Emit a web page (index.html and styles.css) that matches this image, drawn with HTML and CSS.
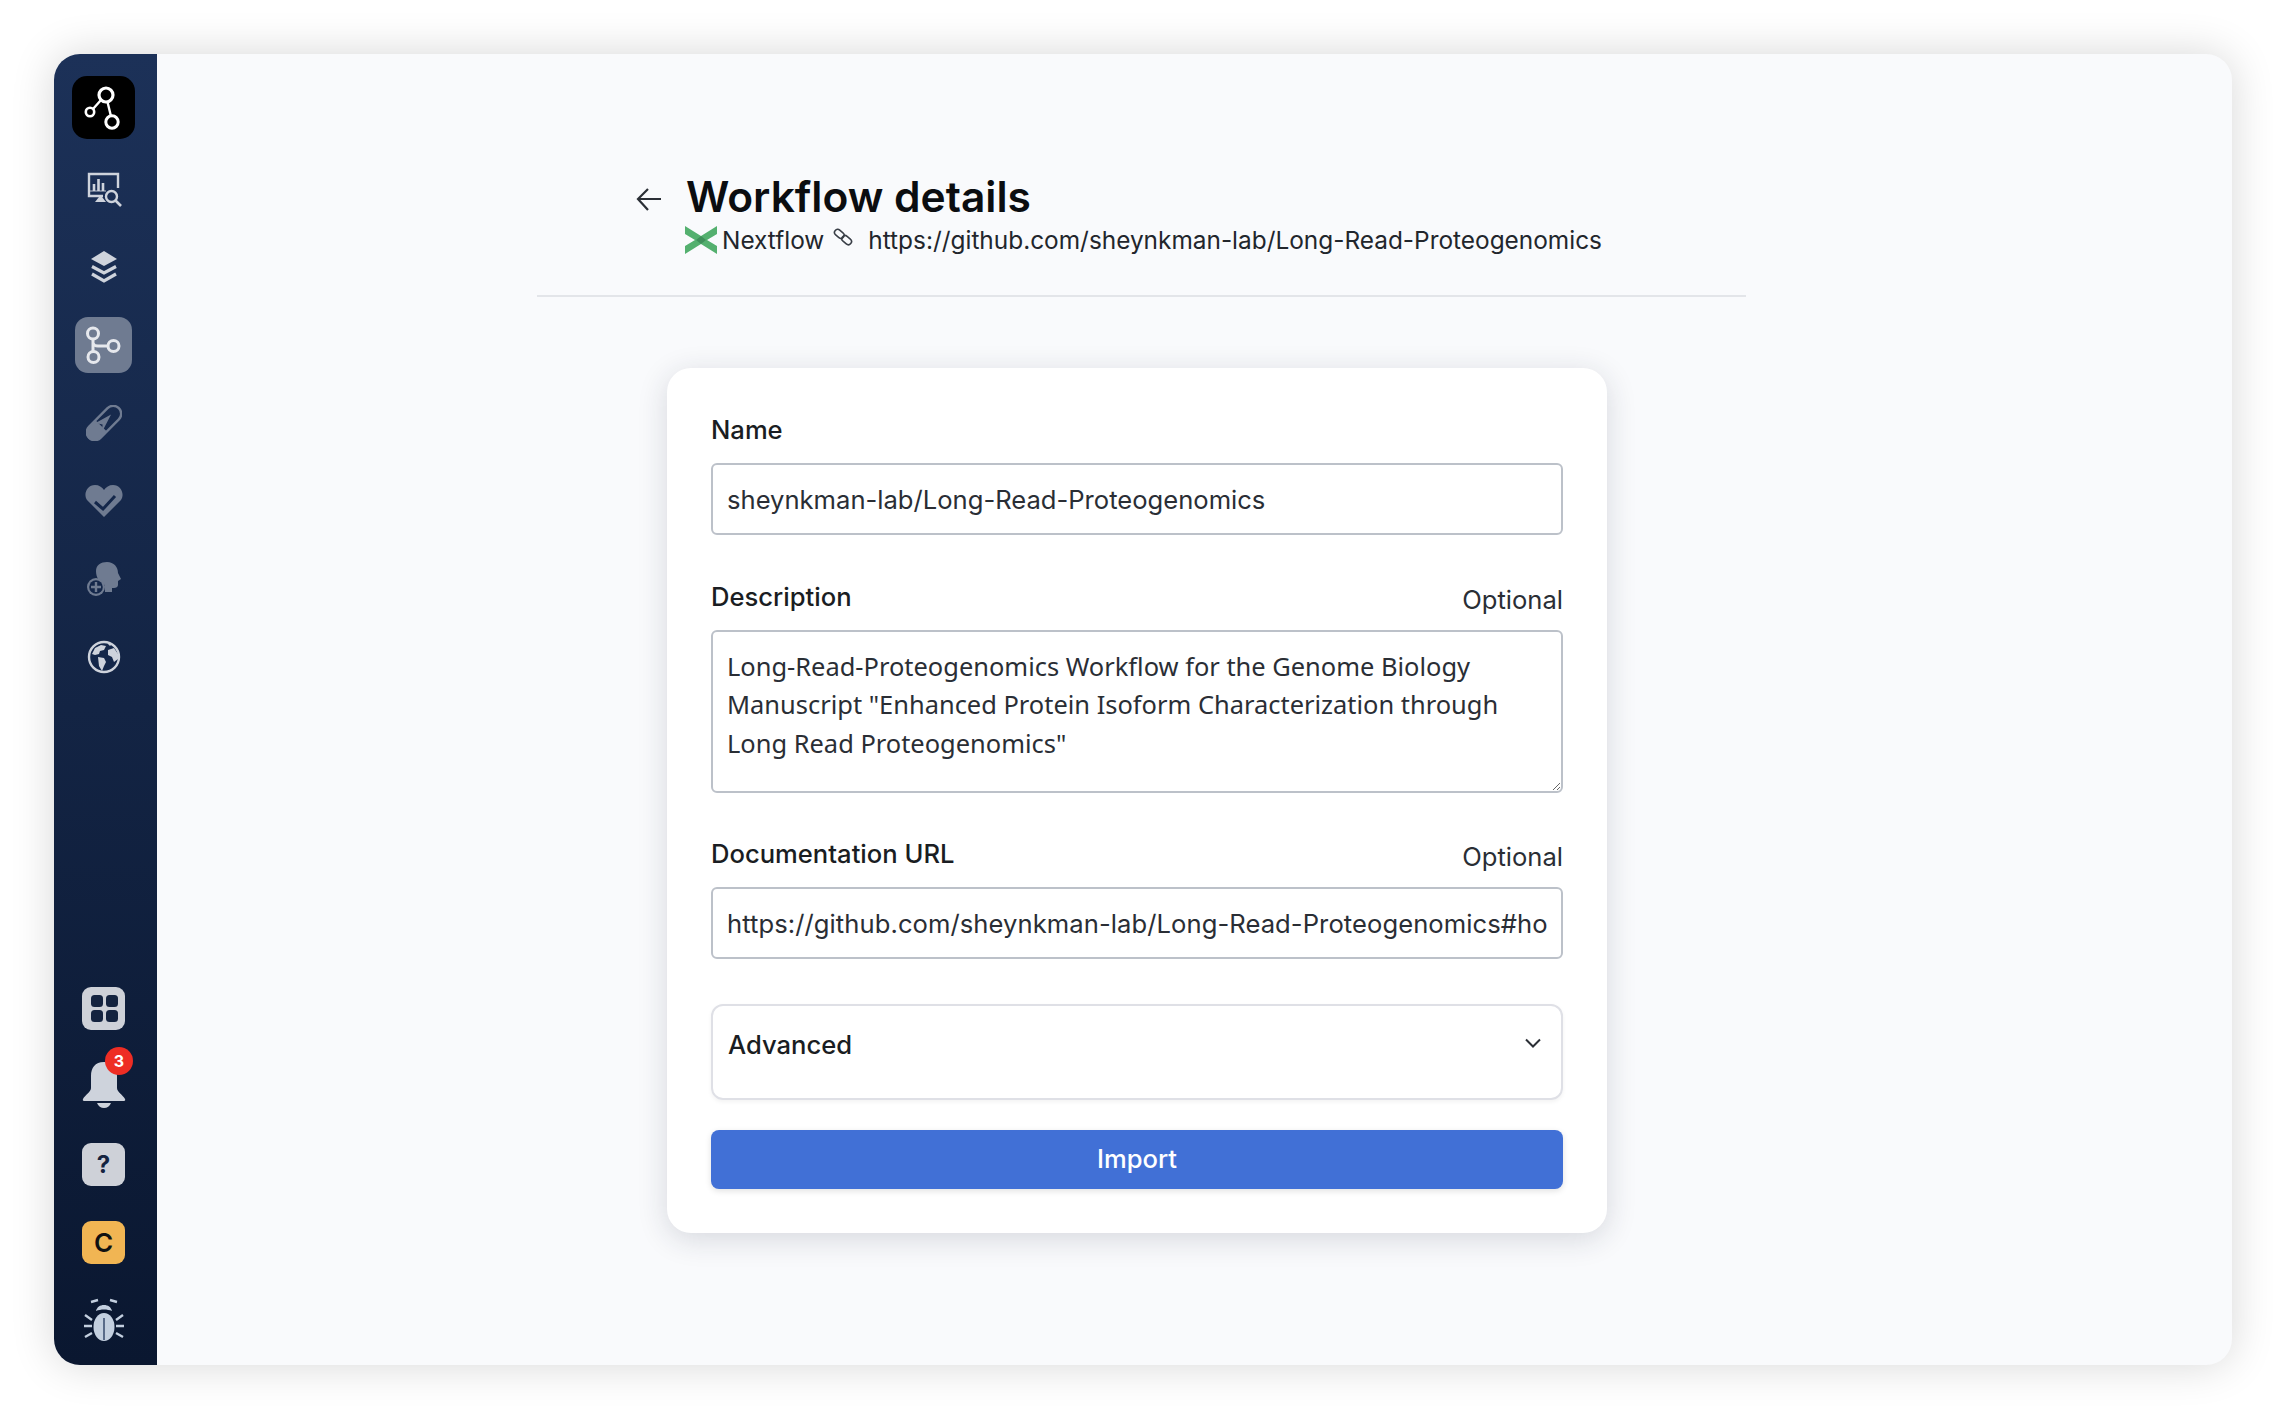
FILE: index.html
```html
<!DOCTYPE html>
<html lang="en">
<head>
<meta charset="utf-8">
<title>Workflow details</title>
<link rel="stylesheet" href="styles.css">
</head>
<body>
<div class="window">
  <nav class="sidebar">
    <div class="nav-top">
      <div class="logo">
        <svg width="63" height="63" viewBox="0 0 63 63" fill="none" stroke="#fff"><circle cx="34" cy="19" r="7" stroke-width="3.2"/><circle cx="18" cy="36" r="4.2" stroke-width="2.6"/><circle cx="40" cy="46" r="6.2" stroke-width="3"/><path d="M29 24 21 33M35.500 26 38.800 39.500" stroke-width="2.4"/></svg>
      </div>
      <div class="slot">
        <svg width="36" height="36" viewBox="0 0 36 36" fill="none" stroke="#ced3dc"><path d="M17 25H3V3H32V17" stroke-width="2.4"/><path d="M8 20V13M12.500 20V8M17 20V12" stroke-width="2.6"/><path d="M3 20H20" stroke-width="1.6" opacity=".6"/><path d="M9 31l4-5h3l4 5z" fill="#ced3dc" stroke="none"/><circle cx="25.500" cy="25.500" r="5.500" stroke-width="2.4"/><path d="M29.500 29.500 35 35" stroke-width="2.6"/></svg>
      </div>
      <div class="slot">
        <svg width="36" height="36" viewBox="0 0 36 36" fill="none" stroke="#ced3dc"><path d="M18 2 31 10 18 17 5 10z" fill="#ced3dc" stroke="none"/><path d="M6 17.500 18 24 30 17.500M6 25 18 32 30 25" stroke-width="3.2"/></svg>
      </div>
      <div class="slot">
        <div class="slot-active">
          <svg width="57" height="56" viewBox="0 0 57 56" fill="none" stroke="#e6e8ed" stroke-width="3"><circle cx="18" cy="16.500" r="5.500"/><circle cx="18.500" cy="40" r="5.500"/><circle cx="38.500" cy="29" r="5.500"/><path d="M18 22V34.500M18 26C18.500 28 20 29 23 29H33"/></svg>
        </div>
      </div>
      <div class="slot">
        <svg width="36" height="36" viewBox="0 0 36 36"><g transform="translate(18 18) rotate(-45)"><rect x="-21" y="-8" width="42" height="16" rx="8" fill="none" stroke="#6f7b91" stroke-width="2.400"/><path d="M-4-8H-14a8 8 0 0 0 0 16H-4z" fill="#6f7b91"/><path d="M-8 5 11-1-6-6-2 0z" fill="#6f7b91"/></g></svg>
      </div>
      <div class="slot">
        <svg width="40" height="36" viewBox="0 0 40 36"><path d="M20 34 3 17C-1 11 3 2 11 2c4 0 7 2 9 5 2-3 5-5 9-5 8 0 12 9 8 15z" fill="#6f7b91"/><path d="M11 19l8 7L31 13" fill="none" stroke="#14274a" stroke-width="3"/></svg>
      </div>
      <div class="slot">
        <svg width="36" height="36" viewBox="0 0 36 36"><path d="M10 10C10 4 15 1 21 1c7 0 11 5 11 11l3 6-3 2v4c0 2-2 3-4 3h-2v4H19v-7c-6-2-9-8-9-14z" fill="#6f7b91"/><circle cx="10" cy="26" r="9" fill="#6f7b91"/><circle cx="10" cy="26" r="6.800" fill="#14274a"/><path d="M10 21v10M5 26h10" stroke="#6f7b91" stroke-width="2.400"/></svg>
      </div>
      <div class="slot">
        <svg width="36" height="36" viewBox="0 0 36 36"><circle cx="18" cy="18" r="15" fill="#14274a" stroke="#ced3dc" stroke-width="2.4"/><path d="M9 9l6-3 5 1-2 4-4 1-1 3-4 1-3-1zM12 18l6 1 2 4-2 4-2 5-3-5zM22 11l6-2 4 6v5l-4 3-2-5-4-2zM22 5h4l-2 2z" fill="#ced3dc"/></svg>
      </div>
    </div>
    <div class="nav-bottom">
      <div class="slot">
        <div class="tile">
          <svg width="42" height="42" viewBox="0 0 42 42" fill="#14233f"><rect x="8" y="8" width="12" height="12" rx="3.500"/><rect x="23" y="8" width="12" height="12" rx="3.500"/><rect x="8" y="23" width="12" height="12" rx="3.500"/><rect x="23" y="23" width="12" height="12" rx="3.500"/></svg>
        </div>
      </div>
      <div class="slot">
        <svg class="bell" width="44" height="50" viewBox="0 0 44 50" fill="#ced3dc"><path d="M22 3c9 0 13 6 13 14v12c0 4 6 7 8 11 .5 1 0 2-1 2H2c-1 0-1.500-1-1-2 2-4 8-7 8-11V17C9 9 13 3 22 3z"/><path d="M15 44h14c-1 3-4 5-7 5s-6-2-7-5z"/></svg>
        <span class="badge">3</span>
      </div>
      <div class="slot"><div class="tile">?</div></div>
      <div class="slot"><div class="tile tile-user">C</div></div>
      <div class="slot">
        <svg width="42" height="44" viewBox="0 0 42 44" fill="#c3cfdf" stroke="#c3cfdf"><ellipse cx="21" cy="29" rx="10.500" ry="14" stroke="none"/><path d="M13 13c1-4 4-6 8-6s7 2 8 6c-5-2-11-2-16 0z" stroke="none"/><path d="M21 20V42" stroke="#3f5273" stroke-width="1.600"/><path d="M8 4l7-2M34 4l-7-2M2 17l7 5M40 17l-7 5M1 28h8M41 28h-8M2 39l7-4M40 39l-7-4" fill="none" stroke-width="2.400"/></svg>
      </div>
    </div>
  </nav>
  <main class="main">
    <header class="page-head">
      <svg class="back" width="26" height="26" viewBox="0 0 26 26" fill="none" stroke="#2b2f36" stroke-width="2.200"><path d="M25 13H3M12 3 2 13l10 11"/></svg>
      <div class="head-text">
        <h1 class="title">Workflow details</h1>
        <div class="meta">
          <svg class="nf" width="32" height="28" viewBox="0 0 32 28"><path d="M0 0 16 10 32 0V8L22 14 32 20V28L16 18 0 28V20L10 14 0 8z" fill="#54b06f"/><path d="M11 14 16 10 21 14 16 18z" fill="#3f8f5a"/></svg>
          <span class="engine">Nextflow</span>
          <svg class="link-icon" width="20" height="20" viewBox="0 0 19 19" fill="none" stroke="#3a3f47" stroke-width="1.500"><rect x="1" y="3.500" width="10" height="6" rx="3" transform="rotate(40 6 6.500)"/><rect x="8" y="9.500" width="10" height="6" rx="3" transform="rotate(40 13 12.500)"/></svg>
          <span class="url">https://github.com/sheynkman-lab/Long-Read-Proteogenomics</span>
        </div>
      </div>
    </header>
    <form class="card">
      <div class="field">
        <div class="label-row"><label class="label">Name</label></div>
        <input class="input" value="sheynkman-lab/Long-Read-Proteogenomics">
      </div>
      <div class="field">
        <div class="label-row"><label class="label">Description</label><span class="optional">Optional</span></div>
        <textarea class="input textarea">Long-Read-Proteogenomics Workflow for the Genome Biology Manuscript "Enhanced Protein Isoform Characterization through Long Read Proteogenomics"</textarea>
      </div>
      <div class="field">
        <div class="label-row"><label class="label">Documentation URL</label><span class="optional">Optional</span></div>
        <input class="input input-url" value="https://github.com/sheynkman-lab/Long-Read-Proteogenomics#how-to-run">
      </div>
      <div class="advanced">
        <span class="advanced-title">Advanced</span>
        <svg width="16" height="10" viewBox="0 0 16 10" fill="none" stroke="#2b2f36" stroke-width="2"><path d="M1 1.500 8 8.500 15 1.500"/></svg>
      </div>
      <button type="button" class="import">Import</button>
    </form>
  </main>
</div>
</body>
</html>
```
FILE: styles.css
```css
* { box-sizing: border-box; }
html, body { margin: 0; height: 100%; }
body {
  padding: 54px;
  background: #fff;
  font-family: Inter, "Liberation Sans", sans-serif;
  color: #1a1d22;
}
.window {
  display: flex;
  height: 1311px;
  border-radius: 26px;
  background: #f9fafc;
  overflow: hidden;
  box-shadow: 0 0 44px rgba(0, 0, 0, .16);
}
.sidebar {
  width: 103px;
  flex: none;
  display: flex;
  flex-direction: column;
  justify-content: space-between;
  padding: 22px 4px 6px 0;
  background: linear-gradient(180deg, #1c3158 0%, #0a1730 100%);
}
.nav-top, .nav-bottom { display: flex; flex-direction: column; align-items: center; }
.logo {
  width: 63px;
  height: 63px;
  margin-bottom: 11px;
  border-radius: 15px;
  background: #000;
}
.logo svg, .slot-active svg, .tile svg { display: block; }
.slot {
  position: relative;
  width: 99px;
  height: 78px;
  display: flex;
  align-items: center;
  justify-content: center;
}
.slot-active { width: 57px; height: 56px; border-radius: 13px; background: #6f7b91; }
.tile {
  width: 43px;
  height: 43px;
  display: flex;
  align-items: center;
  justify-content: center;
  border-radius: 9px;
  background: #ced1d8;
  color: #14233f;
  font-size: 24px;
  font-weight: 700;
}
.tile-user { background: #f1b553; color: #111; font-size: 26px; font-weight: 600; }
.bell { margin-top: -5px; }
.badge {
  position: absolute;
  top: 0;
  left: 51px;
  width: 28px;
  height: 28px;
  display: flex;
  align-items: center;
  justify-content: center;
  border-radius: 50%;
  background: #ee2d24;
  color: #fff;
  font-size: 16px;
  font-weight: 700;
}
.main { flex: 1; min-width: 0; padding: 118px 0 0 380px; }
.page-head {
  width: 1209px;
  height: 125px;
  display: flex;
  align-items: flex-start;
  gap: 24px;
  padding-left: 99px;
  border-bottom: 2px solid #e3e5e9;
}
.back { margin-top: 14px; flex: none; }
.title { margin: 0; font-size: 42.500px; line-height: 50px; font-weight: 600; color: #0b0d10; }
.meta { display: flex; align-items: center; height: 28px; margin-top: 4px; margin-left: -1px; font-size: 24.400px; line-height: 28px; color: #22262c; }
.engine { margin-left: 5px; }
.link-icon { margin: -6px 0 0 9px; }
.url { margin-left: 15px; white-space: nowrap; }
.card {
  width: 940px;
  margin: 71px 0 0 130px;
  padding: 44px;
  background: #fff;
  border-radius: 24px;
  box-shadow: 0 6px 30px rgba(30, 40, 60, .16);
}
.field { margin-bottom: 44px; }
.label-row { display: flex; align-items: center; justify-content: space-between; height: 51px; padding-bottom: 16px; }
.label { font-size: 25.600px; line-height: 30px; font-weight: 500; color: #1a1d22; }
.optional { font-size: 25.600px; line-height: 30px; color: #2a2e35; transform: translateY(3px); }
.input {
  display: block;
  width: 100%;
  height: 72px;
  padding: 0 14px;
  border: 2px solid #bcc1c9;
  border-radius: 6px;
  background: #fff;
  font-family: inherit;
  font-size: 25.600px;
  color: #2a2e35;
}
.input-url { letter-spacing: .07px; }
.textarea {
  height: 163px;
  margin-bottom: -1px;
  padding: 15px 14px;
  font-family: "Noto Sans", sans-serif;
  font-size: 25.450px;
  line-height: 38.400px;
}
.advanced {
  height: 96px;
  display: flex;
  justify-content: space-between;
  padding: 24px 20px 0 15px;
  margin-top: 45px;
  border: 2px solid #dfe0e6;
  border-radius: 12px;
  box-shadow: 0 2px 4px rgba(0, 0, 0, .05);
}
.advanced-title { font-size: 25.600px; line-height: 30px; font-weight: 500; color: #1a1d22; }
.advanced svg { margin-top: 8px; }
.import {
  display: block;
  width: 100%;
  height: 59px;
  margin-top: 30px;
  padding: 0 0 2px;
  border: 0;
  border-radius: 8px;
  background: #4170d6;
  color: #fff;
  font-family: inherit;
  font-size: 25.600px;
  font-weight: 500;
  box-shadow: 0 2px 6px rgba(0, 0, 0, .12);
}
```
